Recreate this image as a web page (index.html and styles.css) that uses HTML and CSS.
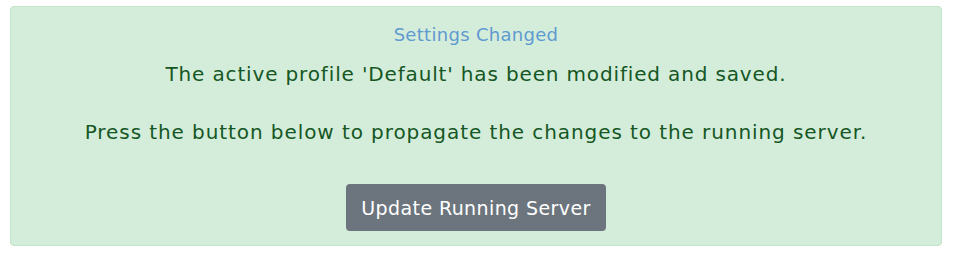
FILE: index.html
```html
<!DOCTYPE html>
<html lang="en">
<head>
<meta charset="utf-8">
<title>Settings Changed</title>
<link rel="stylesheet" href="styles.css">
</head>
<body>
<div class="alert">
  <h5 class="alert-title">Settings Changed</h5>
  <p class="alert-line">The active profile 'Default' has been modified and saved.</p>
  <p class="alert-line alert-line-2">Press the button below to propagate the changes to the running server.</p>
  <button class="btn" type="button">Update Running Server</button>
</div>
</body>
</html>
```

FILE: styles.css
```css
html, body {
  margin: 0;
  padding: 0;
  background: #ffffff;
}

body {
  font-family: "DejaVu Sans", "Inter", sans-serif;
  padding: 6px 12px 0 10px;
}

.alert {
  display: flex;
  flex-direction: column;
  align-items: center;
  background: #d4edda;
  border: 1px solid #c3e6cb;
  border-radius: 4px;
  color: #155724;
  padding: 13px 20px 14px;
  text-align: center;
}

.alert-title {
  margin: 0;
  font-size: 18px;
  font-weight: 400;
  letter-spacing: 0.3px;
  line-height: 30px;
  color: #609ad0;
}

.alert-line {
  margin: 9px 0 0;
  font-size: 20px;
  letter-spacing: 0.85px;
  line-height: 30px;
}

.alert-line-2 {
  margin-top: 28px;
  letter-spacing: 0.92px;
}

.btn {
  margin-top: 37px;
  height: 47px;
  padding: 0 15px;
  border: none;
  border-radius: 4px;
  background: #6c757d;
  color: #ffffff;
  font-family: inherit;
  font-size: 19px;
  letter-spacing: 0.4px;
}
```
